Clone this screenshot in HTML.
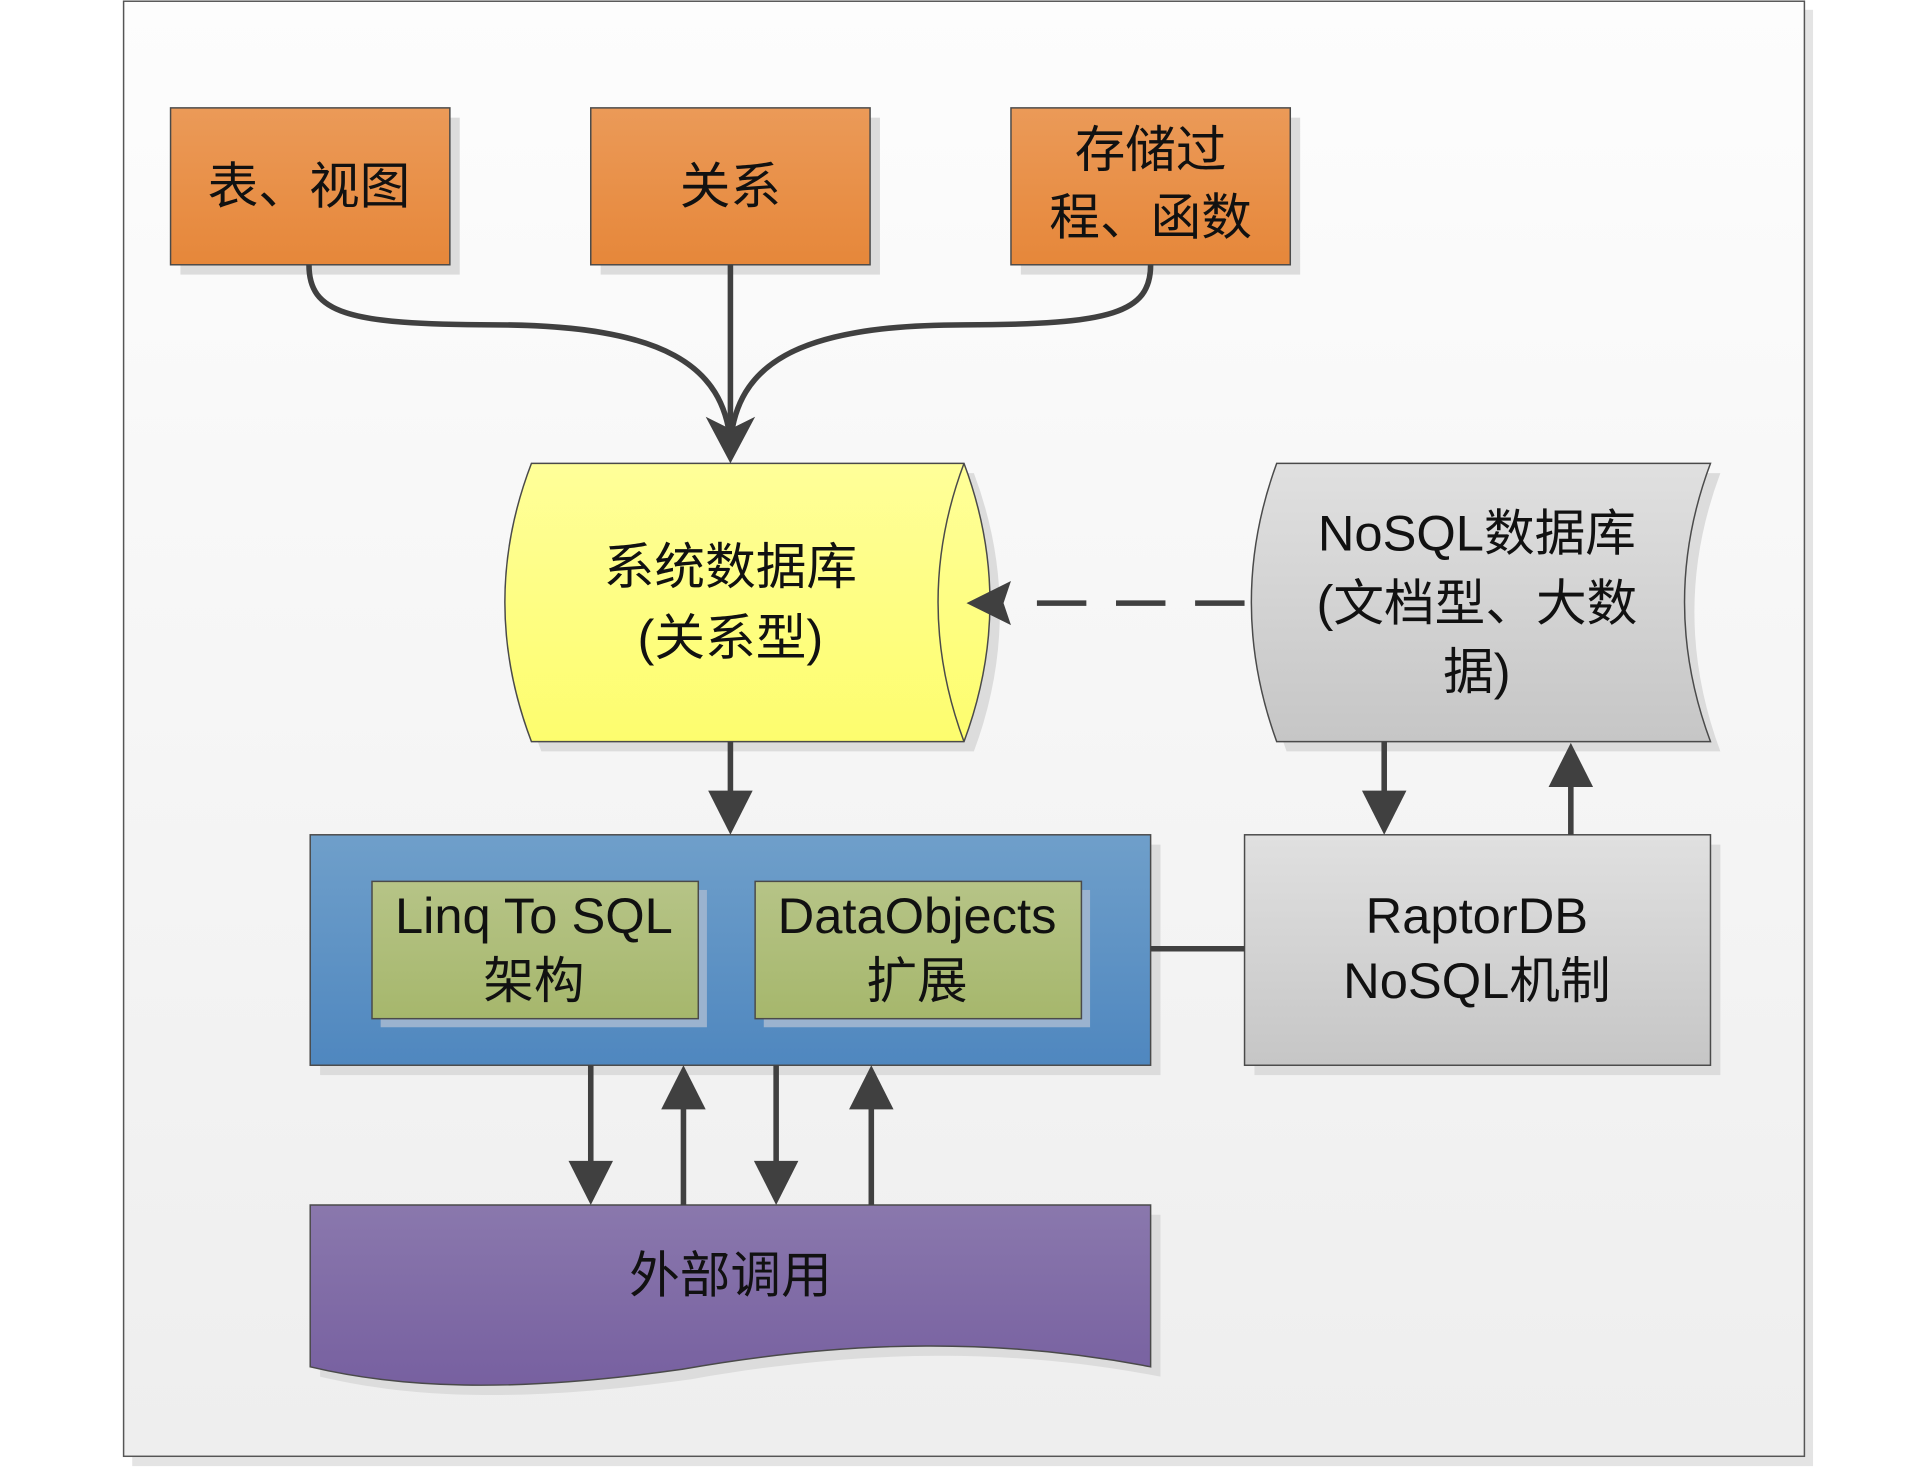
<!DOCTYPE html>
<html><head><meta charset="utf-8"><style>
html,body{margin:0;padding:0;background:#fff;}
svg{display:block}
text{font-family:"Liberation Sans","Noto Sans CJK SC",sans-serif;font-size:41px;fill:#111;text-anchor:middle;dominant-baseline:central}
</style></head><body>
<svg width="1928" height="1471" viewBox="0 0 1560 1200" preserveAspectRatio="none" xmlns="http://www.w3.org/2000/svg">
<defs>
<linearGradient id="bg" x1="0" y1="0" x2="0" y2="1"><stop offset="0" stop-color="#fdfdfd"/><stop offset="1" stop-color="#eeeeee"/></linearGradient>
<linearGradient id="or" x1="0" y1="0" x2="0" y2="1"><stop offset="0" stop-color="#eb9a58"/><stop offset="1" stop-color="#e6873a"/></linearGradient>
<linearGradient id="ye" x1="0" y1="0" x2="0" y2="1"><stop offset="0" stop-color="#ffff99"/><stop offset="1" stop-color="#fdfd6e"/></linearGradient>
<linearGradient id="gr" x1="0" y1="0" x2="0" y2="1"><stop offset="0" stop-color="#e0e0e0"/><stop offset="1" stop-color="#c6c6c6"/></linearGradient>
<linearGradient id="bl" x1="0" y1="0" x2="0" y2="1"><stop offset="0" stop-color="#6f9fca"/><stop offset="1" stop-color="#4f87bf"/></linearGradient>
<linearGradient id="gn" x1="0" y1="0" x2="0" y2="1"><stop offset="0" stop-color="#b6c487"/><stop offset="1" stop-color="#a6b76c"/></linearGradient>
<linearGradient id="pu" x1="0" y1="0" x2="0" y2="1"><stop offset="0" stop-color="#8a78ad"/><stop offset="1" stop-color="#7760a0"/></linearGradient>
</defs>
<rect x="107" y="8" width="1360" height="1188" fill="#e4e4e4"/>
<rect x="100" y="1" width="1360" height="1187" fill="url(#bg)" stroke="#555" stroke-width="1.2"/>
<g fill="#dcdcdc">
<rect x="146" y="96" width="226" height="128"/><rect x="486" y="96" width="226" height="128"/><rect x="826" y="96" width="226" height="128"/>
<rect x="259" y="689" width="680" height="188"/><rect x="1015" y="689" width="377" height="188"/>
<path d="M438 386 L788 386 Q830 499 788 613 L438 613 Q395 499 438 386Z"/>
<path d="M1041 386 L1392 386 Q1350 499 1392 613 L1041 613 Q1000 499 1041 386Z"/>
<path d="M259 991 L939 991 L939 1123 C820 1100 700 1100 560 1125 C420 1145 330 1140 259 1123Z"/>
</g>
<g stroke="#4a4a4a" stroke-width="1.2">
<rect x="138" y="88" width="226" height="128" fill="url(#or)"/>
<rect x="478" y="88" width="226" height="128" fill="url(#or)"/>
<rect x="818" y="88" width="226" height="128" fill="url(#or)"/>
<path d="M430 378 L780 378 Q822 491 780 605 L430 605 Q387 491 430 378Z" fill="url(#ye)"/>
<path d="M780 378 Q738 491 780 605" fill="none"/>
<path d="M1033 378 L1384 378 Q1342 491 1384 605 L1033 605 Q992 491 1033 378Z" fill="url(#gr)"/>
<rect x="251" y="681" width="680" height="188" fill="url(#bl)"/>
<rect x="308" y="726" width="264" height="112" fill="#9bb3cf" stroke="none"/>
<rect x="618" y="726" width="264" height="112" fill="#9bb3cf" stroke="none"/>
<rect x="301" y="719" width="264" height="112" fill="url(#gn)"/>
<rect x="611" y="719" width="264" height="112" fill="url(#gn)"/>
<rect x="1007" y="681" width="377" height="188" fill="url(#gr)"/>
<path d="M251 983 L931 983 L931 1115 C812 1092 692 1092 552 1117 C412 1137 322 1132 251 1115Z" fill="url(#pu)"/>
</g>
<g stroke="#404040" stroke-width="4.5" fill="none">
<path d="M250 216 C250 255 280 265 400 265 C540 265 585 300 591 360"/>
<path d="M591 216 L591 360"/>
<path d="M931 216 C931 255 900 265 780 265 C640 265 597 300 591 360"/>
<path d="M591 605 L591 655"/>
<path d="M1120 605 L1120 655"/><path d="M1271 681 L1271 632"/>
<path d="M931 774 L1007 774"/>
<path d="M478 869 L478 958"/><path d="M553 983 L553 896"/>
<path d="M628 869 L628 958"/><path d="M705 983 L705 896"/>
<path d="M1007 492 L815 492" stroke-dasharray="40 24"/>
</g>
<g fill="#404040">
<path d="M591 378 L571 340 L591 350 L611 340Z"/>
<path d="M591 681 L573 645 L609 645Z"/>
<path d="M1120 681 L1102 645 L1138 645Z"/>
<path d="M1271 606 L1253 642 L1289 642Z"/>
<path d="M478 983 L460 947 L496 947Z"/><path d="M628 983 L610 947 L646 947Z"/>
<path d="M553 869 L535 905 L571 905Z"/><path d="M705 869 L687 905 L723 905Z"/>
<path d="M782 492 L818 474 L812 492 L818 510Z"/>
</g>
<text x="250" y="152">表、视图</text>
<text x="591" y="152">关系</text>
<text x="931" y="122">存储过</text>
<text x="931" y="177">程、函数</text>
<text x="591" y="462">系统数据库</text>
<text x="591" y="520">(关系型)</text>
<text x="1195" y="435">NoSQL数据库</text>
<text x="1195" y="492">(文档型、大数</text>
<text x="1195" y="548">据)</text>
<text x="432" y="747">Linq To SQL</text>
<text x="432" y="800">架构</text>
<text x="742" y="747">DataObjects</text>
<text x="742" y="800">扩展</text>
<text x="1195" y="747">RaptorDB</text>
<text x="1195" y="800">NoSQL机制</text>
<text x="591" y="1040">外部调用</text>
</svg>
</body></html>
